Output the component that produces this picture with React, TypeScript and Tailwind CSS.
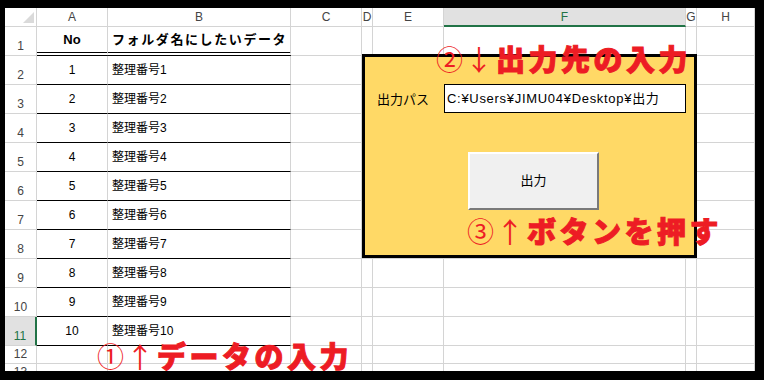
import React from 'react';

const font = { fontFamily: '"Liberation Sans", "Noto Sans CJK JP", sans-serif' };

const colWidths = [
  'w-[71px]',
  'w-[183px]',
  'w-[71px]',
  'w-[11px]',
  'w-[71px]',
  'w-[242px]',
  'w-[11px]',
  'flex-1',
];
const colLetters = ['A', 'B', 'C', 'D', 'E', 'F', 'G', 'H'];

const rows = Array.from({ length: 13 }, (_, i) => i + 1);

const rowHeight = (r: number) => (r <= 11 ? 'h-[29px]' : 'h-[18px]');

const HeaderRow = () => (
  <div className="flex h-[19px] shrink-0">
    {/* corner */}
    <div className="relative w-[32px] shrink-0 border-r border-b border-[#d4d4d4]">
      <div className="absolute right-[2px] bottom-[3px] w-0 h-0 border-l-[11px] border-l-transparent border-b-[11px] border-b-[#dadada]" />
    </div>
    {colLetters.map((c, i) =>
      c === 'F' ? (
        <div
          key={c}
          className={`${colWidths[i]} shrink-0 flex items-center justify-center bg-[#e1e1e1] border-r border-[#d4d4d4] border-b-2 border-b-[#217346] text-[12px] text-[#217346]`}
        >
          {c}
        </div>
      ) : (
        <div
          key={c}
          className={`${colWidths[i]} shrink-0 flex items-center justify-center border-r border-b border-[#d4d4d4] text-[12px] text-[#444]`}
        >
          {c}
        </div>
      )
    )}
  </div>
);

const BodyRow = ({ r }: { r: number }) => {
  const selected = r === 11;
  const inTable = r <= 11;
  const tableBorder =
    r === 1
      ? 'border-b-[4px] border-double border-b-black'
      : inTable
      ? 'border-b border-b-black'
      : 'border-b border-b-[#d4d4d4]';

  return (
    <div className={`flex ${rowHeight(r)} shrink-0`}>
      <div
        className={
          selected
            ? 'w-[32px] shrink-0 flex items-end justify-center pb-[2px] bg-[#e1e1e1] border-r-2 border-r-[#217346] border-b border-b-[#d4d4d4] text-[12px] leading-[14px] text-[#217346]'
            : 'w-[32px] shrink-0 flex items-end justify-center pb-[2px] border-r border-b border-[#d4d4d4] text-[12px] leading-[14px] text-[#444]'
        }
      >
        {r}
      </div>
      {/* A */}
      <div
        className={`w-[71px] shrink-0 flex items-center justify-center border-r border-r-[#d4d4d4] ${tableBorder} text-[12px] text-black`}
      >
        {r === 1 ? <span className="font-bold text-[13px]">No</span> : inTable ? r - 1 : ''}
      </div>
      {/* B */}
      <div
        className={`w-[183px] shrink-0 flex items-center pl-[4px] border-r border-r-[#d4d4d4] ${tableBorder} text-[12px] text-black`}
      >
        {r === 1 ? (
          <span className="font-bold text-[13px] tracking-[1.6px]">フォルダ名にしたいデータ</span>
        ) : inTable ? (
          `整理番号${r - 1}`
        ) : (
          ''
        )}
      </div>
      {colWidths.slice(2).map((w, i) => (
        <div key={i} className={`${w} shrink-0 border-r border-b border-[#d4d4d4]`} />
      ))}
    </div>
  );
};

const Note = ({ mark, arrow, text, className }: { mark: string; arrow: string; text: string; className: string }) => (
  <div
    className={`absolute flex items-center whitespace-nowrap text-[#ed1c24] leading-none ${className}`}
    style={{ fontFamily: '"Noto Sans CJK JP", sans-serif' }}
  >
    <span className="text-[27px] font-normal">{mark}</span>
    <span className="text-[28px] font-normal ml-[2px] mr-[3px]">{arrow}</span>
    <span className="text-[29px] font-black tracking-[3.5px] [-webkit-text-stroke:1px_#ed1c24]">{text}</span>
  </div>
);

export default function App() {
  return (
    <div className="w-[764px] h-[380px] bg-black pl-[5px] pt-[8px] pr-[9px] pb-[9px]" style={font}>
      <div className="relative w-full h-full bg-white overflow-hidden flex flex-col">
        <HeaderRow />
        {rows.map((r) => (
          <BodyRow key={r} r={r} />
        ))}

        {/* output panel */}
        <div className="absolute left-[357px] top-[46px] w-[335px] h-[204px] bg-[#ffd966] border-[3px] border-black">
          <div className="flex flex-col pt-[27px] pl-[12px]">
            <div className="flex items-center h-[29px]">
              <span className="w-[67px] text-[13px] text-black" style={{ fontFamily: '"Noto Sans CJK JP", sans-serif' }}>
                出力パス
              </span>
              <div className="w-[242px] h-[29px] bg-white border border-black flex items-center pl-[2px] text-[13px] tracking-[0.7px] text-black">
                C:¥Users¥JIMU04¥Desktop¥出力
              </div>
            </div>
            <button className="mt-[39px] ml-[91px] w-[131px] h-[58px] bg-[#f0f0f0] border-2 border-t-white border-l-white border-r-[#7a7a7a] border-b-[#7a7a7a] text-[13px] text-black flex items-center justify-center">
              出力
            </button>
          </div>
        </div>

        <Note mark="②" arrow="↓" text="出力先の入力" className="left-[431px] top-[36px]" />
        <Note mark="③" arrow="↑" text="ボタンを押す" className="left-[462px] top-[208px]" />
        <Note mark="①" arrow="↑" text="データの入力" className="left-[92px] top-[333px]" />
      </div>
    </div>
  );
}
